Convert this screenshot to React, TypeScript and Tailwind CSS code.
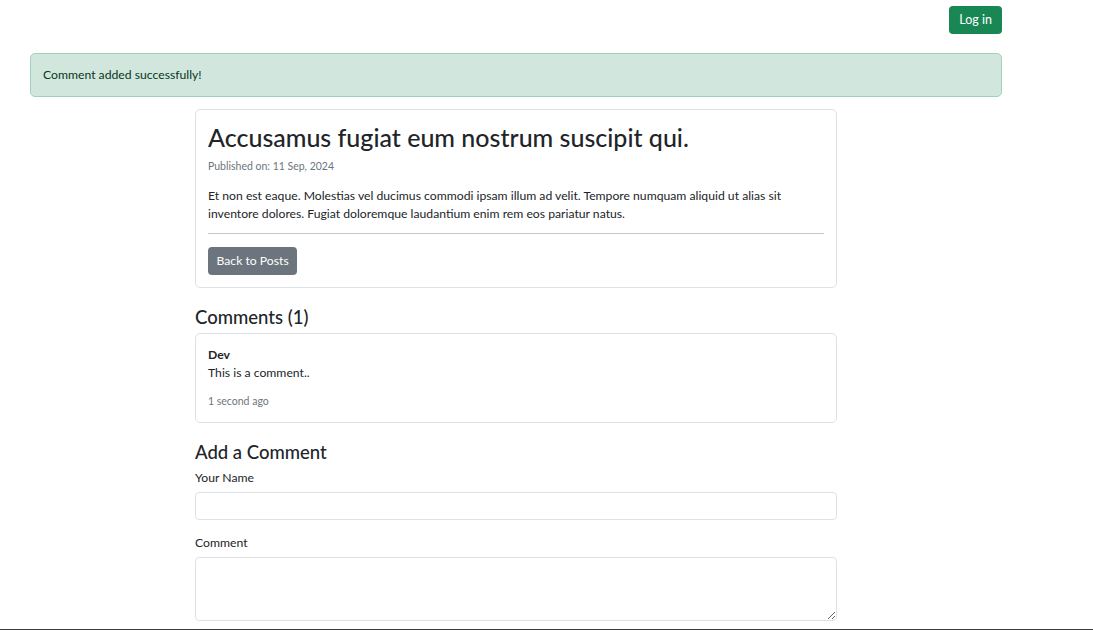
import React from "react";

export default function App() {
  return (
    <div className="min-h-screen bg-white font-['Lato',sans-serif] text-[12.2px] leading-[18px] text-[#212529]">
      {/* top bar */}
      <div className="ml-[30px] w-[972px] pt-[6px] flex justify-end">
        <button className="h-[28px] px-[10px] rounded-[4px] bg-[#198754] text-white text-[12.5px]">
          Log in
        </button>
      </div>

      <div className="ml-[30px] w-[972px] mt-[19px]">
        <div className="h-[44px] px-[12px] flex items-center rounded-[5px] border border-[#a3cfbb] bg-[#d1e7dd] text-[#0a3622]">
          Comment added successfully!
        </div>

        <div className="ml-[165px] w-[642px] mt-[12px] pb-[40px]">
          {/* post */}
          <div className="border border-[#dee2e6] rounded-[5px] p-[12px]">
            <h2 className="text-[25px] leading-[31px] font-medium mb-[4px]">
              Accusamus fugiat eum nostrum suscipit qui.
            </h2>
            <p className="text-[10.5px] text-[#6c757d] mb-[12px]">Published on: 11 Sep, 2024</p>
            <p>
              Et non est eaque. Molestias vel ducimus commodi ipsam illum ad velit. Tempore numquam aliquid ut alias sit
              inventore dolores. Fugiat doloremque laudantium enim rem eos pariatur natus.
            </p>
            <hr className="mt-[10px] mb-[13px] border-t border-[#c4c6c8]" />
            <button className="h-[28px] px-[8.5px] rounded-[4px] bg-[#6c757d] text-white text-[12.2px]">
              Back to Posts
            </button>
          </div>

          {/* comments */}
          <h4 className="mt-[18px] mb-[5px] text-[18.5px] leading-[22px] font-medium">Comments (1)</h4>
          <div className="border border-[#dee2e6] rounded-[5px] px-[12px] pt-[12px] pb-[13px]">
            <div className="font-bold">Dev</div>
            <p>This is a comment..</p>
            <p className="mt-[11px] text-[10.5px] leading-[16px] text-[#6c757d]">1 second ago</p>
          </div>

          {/* form */}
          <h4 className="mt-[18px] mb-[6px] text-[18.5px] leading-[22px] font-medium">Add a Comment</h4>
          <label className="block mb-[5px]">Your Name</label>
          <input
            type="text"
            className="block w-full h-[28px] border border-[#dee2e6] rounded-[4px] px-[9px] outline-none"
          />
          <label className="block mt-[14px] mb-[5px]">Comment</label>
          <textarea
            rows={3}
            className="block w-full h-[64px] border border-[#dee2e6] rounded-[4px] px-[9px] py-[4px] outline-none"
          />
        </div>
      </div>

      <div className="fixed left-0 right-0 bottom-0 h-px bg-[#3c3c3c]" />
    </div>
  );
}
